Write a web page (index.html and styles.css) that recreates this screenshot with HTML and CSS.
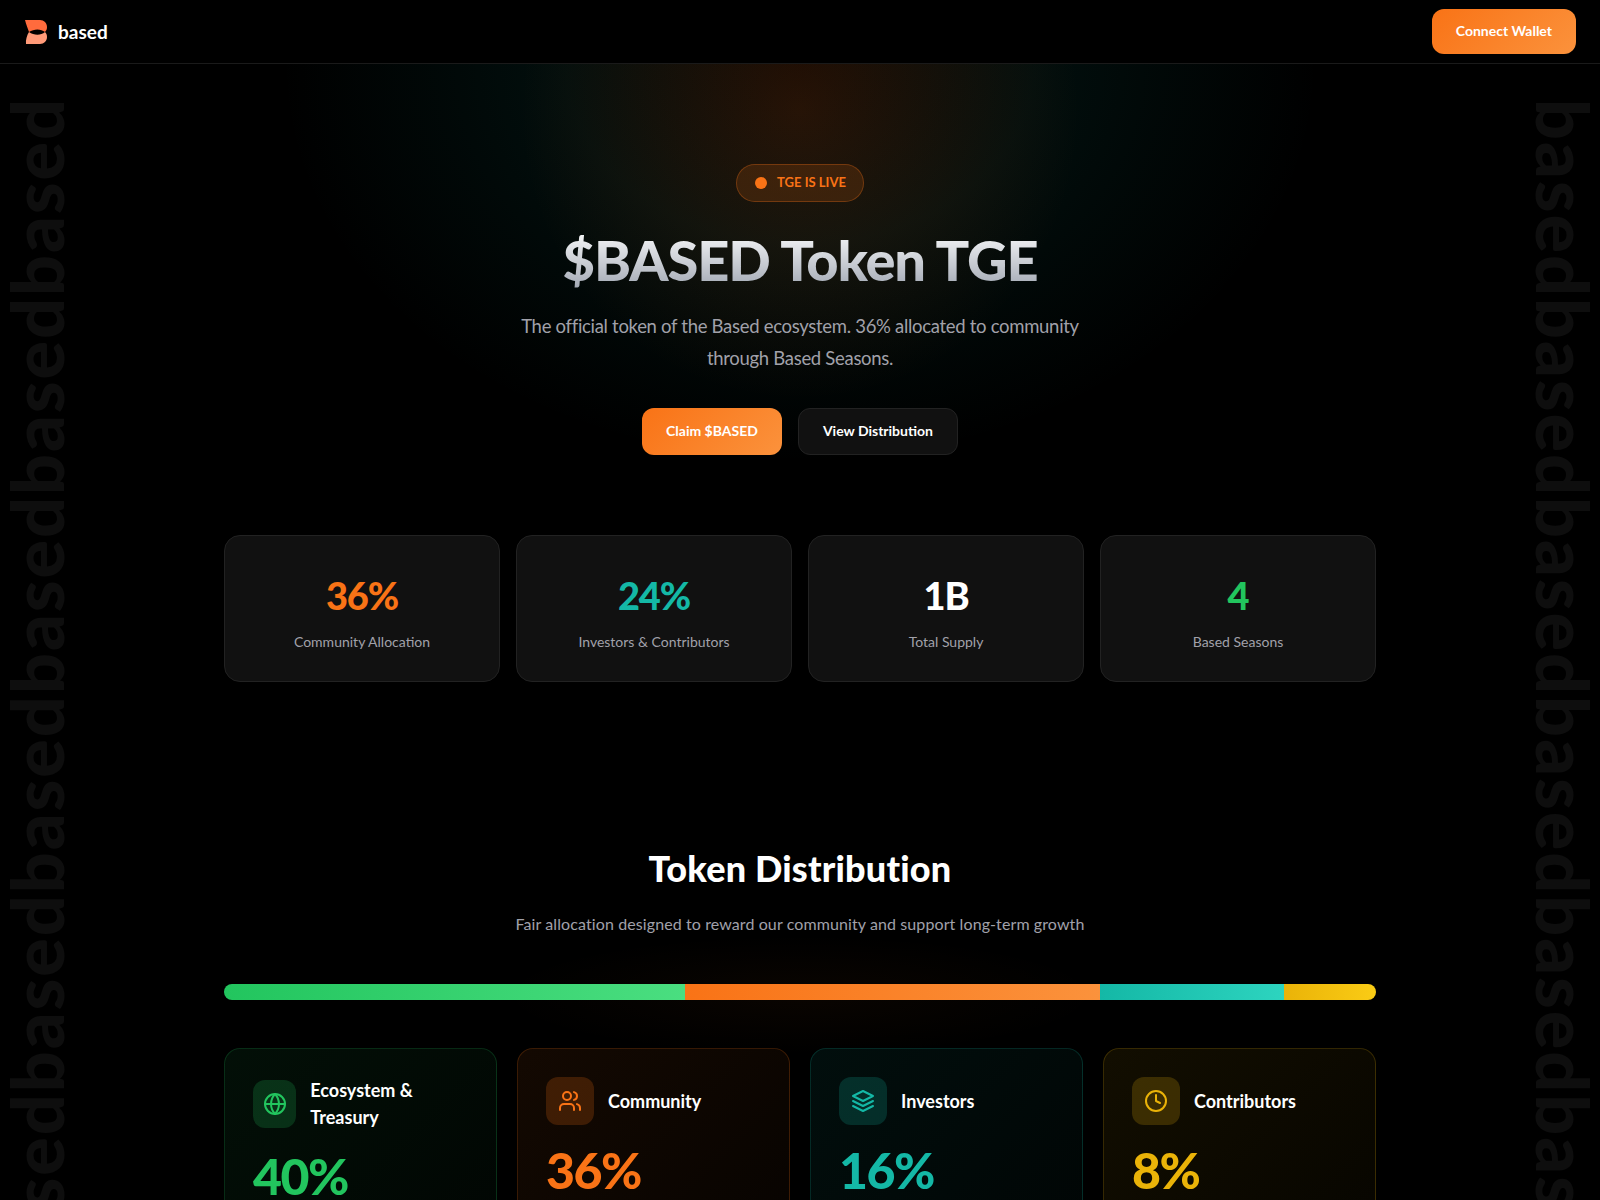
FILE: index.html
```html
<!DOCTYPE html>
<html lang="en">
<head>
    <meta charset="UTF-8">
    <meta name="viewport" content="width=device-width, initial-scale=1.0">
    <title>$BASED Token TGE</title>
    <link rel="stylesheet" href="styles.css">
</head>
<body>
    <div class="side-text side-left">basedbasedbasedbasedbasedbasedbased</div>
    <div class="side-text side-right">basedbasedbasedbasedbasedbasedbased</div>

    <header class="topbar">
        <a class="brand" href="#">
            <svg class="brand-logo" viewBox="0 0 22 24" width="22" height="24">
                <path fill="#ff6b3d" d="M0 0H15C19 0 22 3 22 7C22 9 21.500 10.500 20 12C16 8.500 9 8.500 4 12C3 9 1 4 0 0Z"/>
                <path fill="#ff9a78" d="M4 12C9 15.500 16 15.500 20 12C21.500 13.500 22 15 22 17C22 21 19 24 15 24H1C0.500 20 2 15 4 12Z"/>
            </svg>
            <span class="brand-name">based</span>
        </a>
        <button class="btn btn-orange btn-wallet">Connect Wallet</button>
    </header>

    <section class="hero">
        <div class="badge"><span class="badge-dot"></span>TGE IS LIVE</div>
        <h1>$BASED Token TGE</h1>
        <p class="hero-text">The official token of the Based ecosystem. 36% allocated to community through Based Seasons.</p>
        <div class="hero-actions">
            <button class="btn btn-orange">Claim $BASED</button>
            <button class="btn btn-dark">View Distribution</button>
        </div>
    </section>

    <section class="stats">
        <div class="stat">
            <div class="stat-value orange">36%</div>
            <div class="stat-label">Community Allocation</div>
        </div>
        <div class="stat">
            <div class="stat-value teal">24%</div>
            <div class="stat-label">Investors &amp; Contributors</div>
        </div>
        <div class="stat">
            <div class="stat-value white">1B</div>
            <div class="stat-label">Total Supply</div>
        </div>
        <div class="stat">
            <div class="stat-value green">4</div>
            <div class="stat-label">Based Seasons</div>
        </div>
    </section>

    <section class="distribution">
        <h2>Token Distribution</h2>
        <p class="distribution-text">Fair allocation designed to reward our community and support long-term growth</p>

        <div class="bar">
            <div class="bar-part part-green"></div>
            <div class="bar-part part-orange"></div>
            <div class="bar-part part-teal"></div>
            <div class="bar-part part-yellow"></div>
        </div>

        <div class="alloc-grid">
            <div class="alloc alloc-green">
                <div class="alloc-head">
                    <div class="alloc-icon">
                        <svg viewBox="0 0 24 24" width="24" height="24"><circle cx="12" cy="12" r="10"/><path d="M2 12h20"/><path d="M12 2a15.300 15.300 0 0 1 4 10 15.300 15.300 0 0 1-4 10 15.300 15.300 0 0 1-4-10 15.300 15.300 0 0 1 4-10z"/></svg>
                    </div>
                    <div class="alloc-title">Ecosystem &amp; Treasury</div>
                </div>
                <div class="alloc-value">40%</div>
            </div>
            <div class="alloc alloc-orange">
                <div class="alloc-head">
                    <div class="alloc-icon">
                        <svg viewBox="0 0 24 24" width="24" height="24"><path d="M16 21v-2a4 4 0 0 0-4-4H6a4 4 0 0 0-4 4v2"/><circle cx="9" cy="7" r="4"/><path d="M22 21v-2a4 4 0 0 0-3-3.870"/><path d="M16 3.130a4 4 0 0 1 0 7.750"/></svg>
                    </div>
                    <div class="alloc-title">Community</div>
                </div>
                <div class="alloc-value">36%</div>
            </div>
            <div class="alloc alloc-teal">
                <div class="alloc-head">
                    <div class="alloc-icon">
                        <svg viewBox="0 0 24 24" width="24" height="24"><path d="M12 2 2 7l10 5 10-5-10-5z"/><path d="m2 17 10 5 10-5"/><path d="m2 12 10 5 10-5"/></svg>
                    </div>
                    <div class="alloc-title">Investors</div>
                </div>
                <div class="alloc-value">16%</div>
            </div>
            <div class="alloc alloc-yellow">
                <div class="alloc-head">
                    <div class="alloc-icon">
                        <svg viewBox="0 0 24 24" width="24" height="24"><circle cx="12" cy="12" r="10"/><path d="M12 6v6l4 2"/></svg>
                    </div>
                    <div class="alloc-title">Contributors</div>
                </div>
                <div class="alloc-value">8%</div>
            </div>
        </div>
    </section>
</body>
</html>
```

FILE: styles.css
```css
html, body {
    height: 1200px;
    overflow: hidden;
}
body {
    position: relative;
    margin: 0;
    padding: 0;
    font-family: Lato, "Noto Sans", sans-serif;
    color: #fff;
    background-color: #000;
    background-image:
        radial-gradient(ellipse 300px 60px at 800px 995px, rgba(249, 115, 22, 0.04), transparent),
        radial-gradient(ellipse 280px 290px at 800px 110px, rgba(234, 88, 12, 0.16), transparent),
        radial-gradient(ellipse 520px 400px at 800px 64px, rgba(20, 184, 166, 0.02), rgba(20, 184, 166, 0.08) 45%, transparent);
    background-repeat: no-repeat;
}
.side-text {
    position: absolute;
    height: max-content;
    font-size: 72px;
    line-height: 53px;
    font-weight: 900;
    letter-spacing: 1.9px;
    color: #0e0e0e;
    white-space: nowrap;
    writing-mode: vertical-rl;
    user-select: none;
}
.side-left {
    top: 97px;
    left: 10px;
    transform: rotate(180deg);
}
.side-right {
    top: 99px;
    right: 10px;
}

.topbar {
    display: flex;
    justify-content: space-between;
    align-items: center;
    height: 63px;
    padding: 0 24px 0 25px;
    background: #000;
    border-bottom: 1px solid #1a1a1a;
    position: relative;
}
.brand {
    display: flex;
    align-items: center;
    gap: 11px;
    text-decoration: none;
    color: #fff;
}
.brand-name {
    font-size: 19px;
    font-weight: 700;
}
.btn {
    height: 47px;
    padding: 0 24px 2px;
    font-family: inherit;
    font-size: 14px;
    font-weight: 700;
    color: #fff;
    border: none;
    border-radius: 12px;
    cursor: pointer;
}
.btn-orange {
    background: linear-gradient(135deg, #f97316, #fb923c);
}
.btn-dark {
    background: #111;
    border: 1px solid #222;
}
.btn-wallet {
    height: 45px;
}

.hero {
    position: relative;
    display: flex;
    flex-direction: column;
    align-items: center;
    padding-top: 100px;
    text-align: center;
}
.badge {
    display: flex;
    align-items: center;
    gap: 10px;
    box-sizing: border-box;
    height: 38px;
    padding: 0 17px 2px 18px;
    font-size: 13px;
    font-weight: 700;
    color: #f97316;
    background: rgba(249, 115, 22, 0.15);
    border: 1px solid rgba(249, 115, 22, 0.3);
    border-radius: 20px;
}
.badge-dot {
    width: 12px;
    height: 12px;
    margin-top: 2px;
    border-radius: 50%;
    background: #f97316;
}
h1 {
    margin: 24px 0 0;
    font-size: 56px;
    line-height: 67px;
    font-weight: 900;
    letter-spacing: -0.02em;
    background: linear-gradient(180deg, #ffffff, #9ca3af);
    -webkit-background-clip: text;
    background-clip: text;
    color: transparent;
}
.hero-text {
    width: 600px;
    margin: 17px 0 0;
    font-size: 18.5px;
    line-height: 32px;
    letter-spacing: -0.3px;
    color: #a1a1aa;
}
.hero-actions {
    display: flex;
    gap: 16px;
    margin-top: 34px;
}

.stats {
    position: relative;
    display: grid;
    grid-template-columns: repeat(4, 1fr);
    gap: 16px;
    width: 1152px;
    margin: 80px auto 0;
}
.stat {
    padding-top: 31px;
    height: 114px;
    text-align: center;
    background: #111;
    border: 1px solid #222;
    border-radius: 16px;
}
.stat-value {
    font-size: 38px;
    line-height: 56px;
    font-weight: 900;
    letter-spacing: -0.03em;
}
.stat-label {
    margin-top: 9px;
    font-size: 14px;
    line-height: 20px;
    color: #a1a1aa;
}
.orange { color: #f97316; }
.teal { color: #14b8a6; }
.white { color: #fff; }
.green { color: #22c55e; }

.distribution {
    position: relative;
    width: 1152px;
    margin: 0 auto;
    padding-top: 162px;
}
h2 {
    margin: 0;
    font-size: 36px;
    line-height: 48px;
    font-weight: 900;
    letter-spacing: 0.2px;
    text-align: center;
}
.distribution-text {
    margin: 20px 0 0;
    font-size: 16px;
    line-height: 24px;
    letter-spacing: 0.1px;
    color: #a1a1aa;
    text-align: center;
}
.bar {
    display: flex;
    height: 16px;
    margin-top: 48px;
    border-radius: 8px;
    overflow: hidden;
}
.bar-part {
    height: 100%;
}
.part-green {
    width: 40%;
    background: linear-gradient(90deg, #22c55e, #4ade80);
}
.part-orange {
    width: 36%;
    background: linear-gradient(90deg, #f97316, #fb923c);
}
.part-teal {
    width: 16%;
    background: linear-gradient(90deg, #14b8a6, #2dd4bf);
}
.part-yellow {
    width: 8%;
    background: linear-gradient(90deg, #eab308, #facc15);
}
.alloc-grid {
    display: grid;
    grid-template-columns: repeat(4, 1fr);
    gap: 20px;
    margin-top: 48px;
}
.alloc {
    padding: 28px;
    height: 300px;
    border-radius: 16px;
    border: 1px solid;
}
.alloc-head {
    display: flex;
    align-items: center;
    gap: 14px;
}
.alloc-icon {
    display: flex;
    align-items: center;
    justify-content: center;
    flex: 0 1 48px;
    min-width: 0;
    height: 48px;
    border-radius: 12px;
}
.alloc-icon svg {
    fill: none;
    stroke: currentColor;
    stroke-width: 2;
    stroke-linecap: round;
    stroke-linejoin: round;
    flex-shrink: 0;
}
.alloc-title {
    font-size: 18px;
    line-height: 27px;
    font-weight: 700;
}
.alloc-value {
    margin-top: 16px;
    font-size: 50px;
    line-height: 58px;
    font-weight: 900;
    letter-spacing: -0.03em;
}
.alloc-green {
    background: linear-gradient(135deg, rgba(34, 197, 94, 0.08), rgba(34, 197, 94, 0.01));
    border-color: rgba(34, 197, 94, 0.2);
}
.alloc-green .alloc-icon {
    color: #22c55e;
    background: rgba(34, 197, 94, 0.2);
}
.alloc-green .alloc-value { color: #22c55e; }
.alloc-orange {
    background: linear-gradient(135deg, rgba(249, 115, 22, 0.08), rgba(249, 115, 22, 0.01));
    border-color: rgba(249, 115, 22, 0.2);
}
.alloc-orange .alloc-icon {
    color: #f97316;
    background: rgba(249, 115, 22, 0.2);
}
.alloc-orange .alloc-value { color: #f97316; }
.alloc-teal {
    background: linear-gradient(135deg, rgba(20, 184, 166, 0.08), rgba(20, 184, 166, 0.01));
    border-color: rgba(20, 184, 166, 0.2);
}
.alloc-teal .alloc-icon {
    color: #14b8a6;
    background: rgba(20, 184, 166, 0.2);
}
.alloc-teal .alloc-value { color: #14b8a6; }
.alloc-yellow {
    background: linear-gradient(135deg, rgba(234, 179, 8, 0.08), rgba(234, 179, 8, 0.01));
    border-color: rgba(234, 179, 8, 0.2);
}
.alloc-yellow .alloc-icon {
    color: #eab308;
    background: rgba(234, 179, 8, 0.2);
}
.alloc-yellow .alloc-value { color: #eab308; }
```
